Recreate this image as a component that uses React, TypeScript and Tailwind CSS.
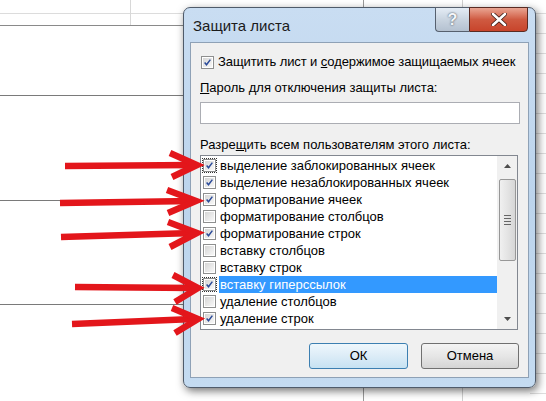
import React from 'react';

const items: { label: string; checked: boolean; selected?: boolean; focus?: boolean }[] = [
  { label: 'выделение заблокированных ячеек', checked: true, focus: true },
  { label: 'выделение незаблокированных ячеек', checked: true },
  { label: 'форматирование ячеек', checked: true },
  { label: 'форматирование столбцов', checked: false },
  { label: 'форматирование строк', checked: true },
  { label: 'вставку столбцов', checked: false },
  { label: 'вставку строк', checked: false },
  { label: 'вставку гиперссылок', checked: true, selected: true, focus: true },
  { label: 'удаление столбцов', checked: false },
  { label: 'удаление строк', checked: true },
];

function CheckBox({ checked, focus }: { checked: boolean; focus?: boolean }) {
  return (
    <div className={`p-[1px] ${focus ? 'outline outline-1 outline-dotted outline-[#333] -outline-offset-1' : ''}`}>
      <div className="w-[13px] h-[13px] border border-[#8e8f8f] bg-white p-[1px]">
        <div className="w-full h-full bg-gradient-to-br from-[#d6d6d6] to-[#f8f8f8] relative">
          {checked && (
            <svg viewBox="0 0 11 11" className="absolute inset-0 w-full h-full">
              <path d="M2 5.5 L4.3 8.3 L9 2" fill="none" stroke="#2a4a99" strokeWidth="1.8" />
            </svg>
          )}
        </div>
      </div>
    </div>
  );
}

function SheetGrid() {
  const rightLines = Array.from({ length: 20 }).map((_, i) => 13 + i * 20);
  return (
    <svg className="absolute inset-0" width="546" height="401">
      <line x1="0" y1="13.5" x2="546" y2="13.5" stroke="#dcdcdc" />
      <line x1="130.5" y1="0" x2="130.5" y2="25" stroke="#d8d8d8" />
      <line x1="363.5" y1="0" x2="363.5" y2="401" stroke="#9a9a9a" />
      <line x1="462.5" y1="0" x2="462.5" y2="401" stroke="#d0d0d0" />
      <line x1="0" y1="25.5" x2="190" y2="25.5" stroke="#8a8a8a" />
      <line x1="0" y1="95.5" x2="190" y2="95.5" stroke="#7a7a7a" />
      <line x1="0" y1="200.5" x2="190" y2="200.5" stroke="#7a7a7a" />
      <line x1="0" y1="304.5" x2="190" y2="304.5" stroke="#7a7a7a" />
      {rightLines.map((y) => (
        <line key={y} x1="530" y1={y + 0.5} x2="546" y2={y + 0.5} stroke="#dedede" />
      ))}
    </svg>
  );
}

function Arrows() {
  const arrows = [
    { x0: 65, y0: 166, tx: 197, ty: 165, ux: 170, uy: 153, lx: 172, ly: 177 },
    { x0: 60, y0: 203, tx: 196, ty: 201, ux: 167, uy: 190, lx: 168, ly: 213 },
    { x0: 61, y0: 237, tx: 197, ty: 233, ux: 168, uy: 222, lx: 170, ly: 247 },
    { x0: 75, y0: 287, tx: 198, ty: 288, ux: 173, uy: 275, lx: 175, ly: 302 },
    { x0: 72, y0: 324, tx: 198, ty: 319, ux: 172, uy: 308, lx: 175, ly: 333 },
  ];
  return (
    <svg className="absolute inset-0 z-20 pointer-events-none" width="546" height="401">
      {arrows.map((a, i) => (
        <g key={i} stroke="#e3161b" strokeWidth="6.5" fill="none">
          <line x1={a.x0} y1={a.y0} x2={a.tx - 4} y2={a.ty} />
          <polyline points={`${a.ux},${a.uy} ${a.tx},${a.ty} ${a.lx},${a.ly}`} strokeLinejoin="miter" />
        </g>
      ))}
    </svg>
  );
}

function ScrollBar() {
  return (
    <div className="w-[20px] h-full bg-[#f0f0f0] flex flex-col items-center">
      <div className="h-[20px] w-full flex items-center justify-center">
        <svg width="7" height="4" viewBox="0 0 7 4">
          <path d="M0 4 L3.5 0 L7 4 Z" fill="#4d4d4d" />
        </svg>
      </div>
      <div className="mt-[3px] h-[82px] w-[17px] rounded-[2px] border border-[#979797] bg-gradient-to-r from-[#f0f0f0] via-[#e4e4e4] to-[#d6d6d6] flex flex-col items-center justify-center gap-[2px]">
        <div className="w-[7px] h-[1px] bg-[#666]" />
        <div className="w-[7px] h-[1px] bg-[#666]" />
        <div className="w-[7px] h-[1px] bg-[#666]" />
        <div className="w-[7px] h-[1px] bg-[#666]" />
      </div>
      <div className="flex-1" />
      <div className="h-[20px] w-full flex items-center justify-center">
        <svg width="7" height="4" viewBox="0 0 7 4">
          <path d="M0 0 L3.5 4 L7 0 Z" fill="#4d4d4d" />
        </svg>
      </div>
    </div>
  );
}

function Dialog() {
  return (
    <div className="relative w-[353px] h-[381px] rounded-[7px] border border-[#4f5b6a] bg-gradient-to-b from-[#c9ddf2] via-[#bcd4ec] to-[#c4dbf1] shadow-[2px_3px_8px_rgba(0,0,0,0.55)] flex flex-col">
      {/* caption */}
      <div className="h-[34px] flex items-start justify-between">
        <div className="pl-[9px] pt-[9px] text-[15px] leading-[18px] text-[#1b1b1b]">Защита листа</div>
        <div className="flex mr-[7px] -mt-[1px]">
          <div className="w-[34px] h-[25px] rounded-bl-[4px] border border-[#56606e] border-r-0 bg-gradient-to-b from-[#e4ecf5] via-[#c9d4e0] to-[#b4c1d0] flex items-center justify-center">
            <span className="text-[16px] leading-none font-bold text-[#f4f6f9] [text-shadow:0_0_2px_#2a3340]">?</span>
          </div>
          <div className="w-[59px] h-[25px] rounded-br-[4px] border border-[#5a2b22] bg-gradient-to-b from-[#e9a593] via-[#cf5a41] to-[#c8442b] flex items-center justify-center">
            <svg width="16" height="13" viewBox="0 0 16 13">
              <path d="M2 1 L14 12 M14 1 L2 12" stroke="#3a1a14" strokeWidth="4.2" strokeLinecap="round" />
              <path d="M2 1 L14 12 M14 1 L2 12" stroke="#ffffff" strokeWidth="2.6" strokeLinecap="round" />
            </svg>
          </div>
        </div>
      </div>

      {/* client area */}
      <div className="mx-[6px] h-[336px] border border-[#8ea1b6] bg-[#f0f0f0] px-[9px] pt-[11px] flex flex-col text-[13px] leading-[16px] text-black">
        <div className="h-[16px] flex items-center gap-[3px] whitespace-nowrap">
          <CheckBox checked />
          <span className="tracking-[-0.1px]">
            Защитить лист и <span className="underline">с</span>одержимое защищаемых ячеек
          </span>
        </div>
        <div className="mt-[10px] h-[16px]">
          <span className="underline">П</span>ароль для отключения защиты листа:
        </div>
        <div className="mt-[6px] h-[22px] w-[320px] border border-[#abadb3] bg-white" />
        <div className="mt-[13px] h-[16px]">
          Разре<span className="underline">щ</span>ить всем пользователям этого листа:
        </div>
        <div className="mt-[2px] h-[175px] w-[318px] border border-[#828790] bg-white flex">
          <div className="flex-1 pt-[1px] pl-[1px]">
            {items.map((it) => (
              <div key={it.label} className="h-[17px] flex items-center whitespace-nowrap">
                <CheckBox checked={it.checked} focus={it.focus} />
                <span
                  className={`ml-[2px] h-[17px] flex items-center pl-[1px] ${
                    it.selected ? 'bg-[#3399ff] text-white flex-1' : ''
                  }`}
                >
                  {it.label}
                </span>
              </div>
            ))}
          </div>
          <ScrollBar />
        </div>
        <div className="mt-[13px] h-[26px] flex justify-end gap-[13px]">
          <button className="w-[99px] h-[26px] rounded-[3px] border border-[#3c7fb1] bg-gradient-to-b from-[#eef7fc] via-[#dcecf7] to-[#c6e2f2] text-[13px]">
            ОК
          </button>
          <button className="w-[98px] h-[26px] rounded-[3px] border border-[#707070] bg-gradient-to-b from-[#f4f4f4] via-[#e6e6e6] to-[#d4d4d4] text-[13px]">
            Отмена
          </button>
        </div>
      </div>
    </div>
  );
}

export default function App() {
  return (
    <div className="relative w-[546px] h-[401px] overflow-hidden bg-white font-['Liberation_Sans',Arial,sans-serif]">
      <SheetGrid />
      <div className="relative z-10 pl-[183px] pt-[7px]">
        <Dialog />
      </div>
      <Arrows />
    </div>
  );
}
